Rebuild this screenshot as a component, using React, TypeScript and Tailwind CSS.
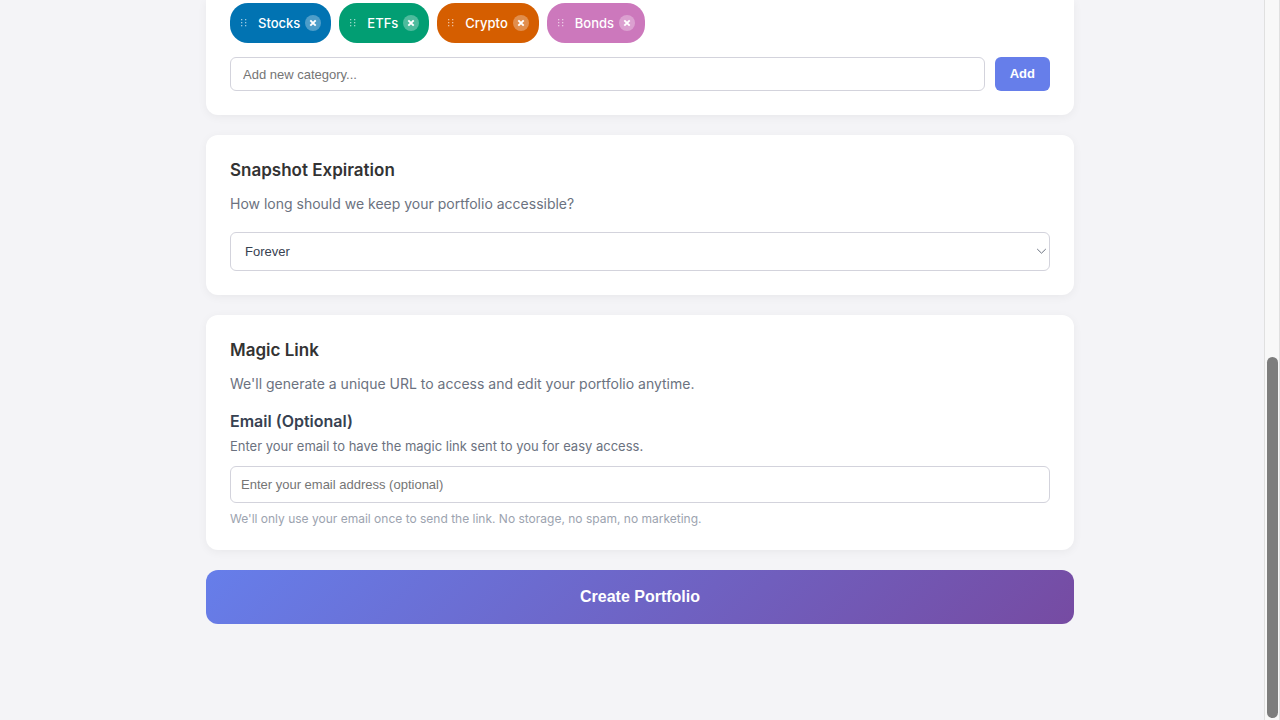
import { useState, type ReactNode } from 'react';

type Category = { name: string; color: string };

const initialCategories: Category[] = [
  { name: 'Stocks', color: 'bg-[#0173b2]' },
  { name: 'ETFs', color: 'bg-[#029e73]' },
  { name: 'Crypto', color: 'bg-[#d55e00]' },
  { name: 'Bonds', color: 'bg-[#cc78bc]' },
];

const controlFont = "font-['Liberation_Sans',Arial,sans-serif]";
const fieldStyle =
  'rounded-md border border-[#d3d3dc] bg-white placeholder:text-[#757575] text-[13px] outline-none focus:border-[#667eea]';

function DragHandle() {
  return (
    <svg width="8" height="10" viewBox="0 0 8 10" fill="#fff" fillOpacity="0.6" aria-hidden="true">
      {[1, 4, 7].map((y) => (
        <g key={y}>
          <rect x="1" y={y} width="1.3" height="1.3" />
          <rect x="5" y={y} width="1.3" height="1.3" />
        </g>
      ))}
    </svg>
  );
}

function Chip({ category, onRemove }: { category: Category; onRemove: () => void }) {
  return (
    <li className={`flex h-10 items-center rounded-[18px] px-2.5 text-[13px] font-medium text-white ${category.color}`}>
      <DragHandle />
      <span className="ml-2.5 leading-5">{category.name}</span>
      <button
        type="button"
        onClick={onRemove}
        aria-label={`Remove ${category.name}`}
        className="ml-[5px] flex size-4 items-center justify-center rounded-full bg-white/30"
      >
        <svg width="8" height="8" viewBox="0 0 8 8" fill="none" stroke="#fff" strokeWidth="1.9" aria-hidden="true">
          <path d="M1.3 1.3 6.7 6.7M6.7 1.3 1.3 6.7" />
        </svg>
      </button>
    </li>
  );
}

function Card({ title, description, children }: { title: string; description: string; children: ReactNode }) {
  return (
    <section className="rounded-xl bg-white p-6 shadow-[0_2px_10px_rgba(0,0,0,0.05)]">
      <h2 className="mb-3 text-[17px] leading-[22px] font-semibold text-[#333]">{title}</h2>
      <p className="mb-[18px] text-sm leading-[21px] text-[#6b7280]">{description}</p>
      {children}
    </section>
  );
}

export default function App() {
  const [categories, setCategories] = useState(initialCategories);
  const [draft, setDraft] = useState('');

  const addCategory = () => {
    const name = draft.trim();
    if (!name) return;
    setCategories([...categories, { name, color: 'bg-[#0173b2]' }]);
    setDraft('');
  };

  return (
    <div className="flex min-h-screen bg-[#f4f4f7] font-['Inter',sans-serif]">
      <main className="min-w-0 flex-1 pl-4">
        <div className="mx-auto flex max-w-[868px] flex-col gap-5">
          <section className="rounded-b-xl bg-white px-6 pt-[3px] pb-6 shadow-[0_2px_10px_rgba(0,0,0,0.05)]">
            <ul className="mb-3.5 flex flex-wrap gap-2">
              {categories.map((category) => (
                <Chip
                  key={category.name}
                  category={category}
                  onRemove={() => setCategories(categories.filter((c) => c !== category))}
                />
              ))}
            </ul>
            <form
              className="flex gap-2.5"
              onSubmit={(event) => {
                event.preventDefault();
                addCategory();
              }}
            >
              <input
                type="text"
                aria-label="New category"
                placeholder="Add new category..."
                value={draft}
                onChange={(event) => setDraft(event.target.value)}
                className={`h-[34px] min-w-0 flex-1 px-3 ${fieldStyle} ${controlFont}`}
              />
              <button
                type="submit"
                className={`h-[34px] rounded-md bg-[#667eea] px-[15px] text-[13px] font-semibold text-white ${controlFont}`}
              >
                Add
              </button>
            </form>
          </section>

          <Card title="Snapshot Expiration" description="How long should we keep your portfolio accessible?">
            <div className="grid items-center">
              <select
                aria-label="Snapshot expiration"
                className={`col-start-1 row-start-1 h-[39px] w-full appearance-none px-3.5 text-[#374151] ${fieldStyle} ${controlFont}`}
              >
                <option>Forever</option>
              </select>
              <svg
                className="pointer-events-none col-start-1 row-start-1 mr-[3px] justify-self-end"
                width="11"
                height="7"
                viewBox="0 0 11 7"
                fill="none"
                stroke="#6b7280"
                strokeWidth="1"
                aria-hidden="true"
              >
                <path d="M1.2 1 5.5 5.2 9.8 1" />
              </svg>
            </div>
          </Card>

          <Card
            title="Magic Link"
            description="We'll generate a unique URL to access and edit your portfolio anytime."
          >
            <label htmlFor="email" className="mb-[5px] block text-base leading-[19px] font-semibold text-[#374151]">
              Email (Optional)
            </label>
            <p className="mb-2.5 text-[13px] leading-5 text-[#6b7280]">
              Enter your email to have the magic link sent to you for easy access.
            </p>
            <input
              id="email"
              type="email"
              placeholder="Enter your email address (optional)"
              className={`mb-2 block h-[37px] w-full px-2.5 ${fieldStyle} ${controlFont}`}
            />
            <p className="text-xs leading-[15px] text-[#9ca3af]">
              We'll only use your email once to send the link. No storage, no spam, no marketing.
            </p>
          </Card>

          <button
            type="button"
            className={`h-[54px] rounded-xl bg-[linear-gradient(135deg,#667eea_0%,#764ba2_100%)] text-base font-semibold text-white ${controlFont}`}
          >
            Create Portfolio
          </button>
        </div>
      </main>
      <div className="flex w-4 flex-col justify-end border-x border-x-[#e0e0e0] bg-[#f8f8f8] px-0.5 pb-0.5" aria-hidden="true">
        <div className="h-[361px] w-[11px] rounded-full bg-[#7d7d7d]" />
      </div>
    </div>
  );
}
